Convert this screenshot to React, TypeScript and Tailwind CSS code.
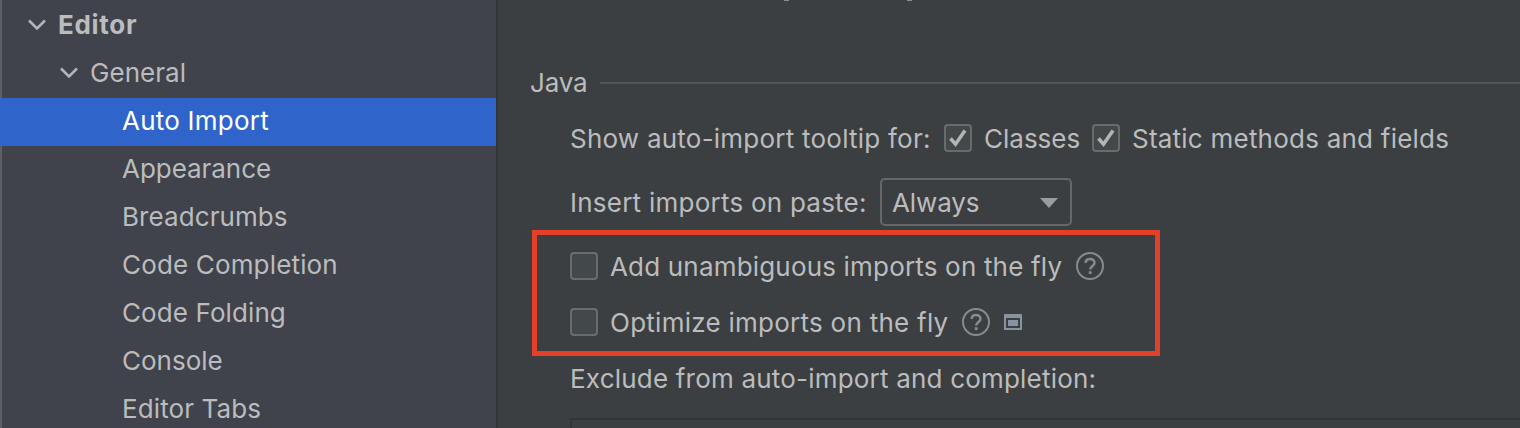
import { clsx } from "clsx";

type TreeItem = {
  label: string;
  level: number;
  expanded?: boolean;
  selected?: boolean;
  tracking: string;
};

const treeItems: TreeItem[] = [
  { label: "Editor", level: 0, expanded: true, tracking: "tracking-[0.7px]" },
  { label: "General", level: 1, expanded: true, tracking: "tracking-[0.05px]" },
  { label: "Auto Import", level: 2, selected: true, tracking: "tracking-[0.22px]" },
  { label: "Appearance", level: 2, tracking: "tracking-[-0.05px]" },
  { label: "Breadcrumbs", level: 2, tracking: "tracking-[0.08px]" },
  { label: "Code Completion", level: 2, tracking: "tracking-[0.16px]" },
  { label: "Code Folding", level: 2, tracking: "tracking-[0.1px]" },
  { label: "Console", level: 2, tracking: "tracking-[0px]" },
  { label: "Editor Tabs", level: 2, tracking: "tracking-[0.1px]" },
];

function Chevron() {
  return (
    <svg width="18" height="12" viewBox="0 0 18 12" fill="none" className="shrink-0">
      <path d="M1 1.5L9 9.5L17 1.5" stroke="#b2b5b9" strokeWidth="2.5" />
    </svg>
  );
}

function Checkbox({ checked = false }: { checked?: boolean }) {
  return (
    <span className="flex h-7 w-7 shrink-0 items-center justify-center rounded-[4px] border-2 border-[#686c6b] bg-[#43484a]">
      {checked && (
        <svg width="24" height="24" viewBox="0 0 24 24" fill="none">
          <path d="M4.5 12.5L9.5 18.2L19 4.5" stroke="#b2b4b5" strokeWidth="3.6" />
        </svg>
      )}
    </span>
  );
}

function HelpIcon() {
  return (
    <svg width="28" height="28" viewBox="0 0 28 28" fill="none" className="shrink-0">
      <circle cx="14" cy="14" r="13" stroke="#868b91" strokeWidth="2" />
      <path
        d="M9.7 11C9.7 8.6 11.5 7 14 7C16.5 7 18.5 8.5 18.5 10.9C18.5 13.9 14.2 14.1 14.2 17.6"
        stroke="#868b91"
        strokeWidth="2.5"
      />
      <rect x="12.8" y="19.2" width="2.8" height="2.8" fill="#868b91" />
    </svg>
  );
}

function ScopeIcon() {
  return (
    <svg width="18" height="16" viewBox="0 0 18 16" className="shrink-0">
      <path d="M0 0H18V16H0V0ZM2 4V14H16V4H2Z" fill="#8793a0" fillRule="evenodd" />
      <rect x="4" y="6" width="10" height="6" fill="#8793a0" />
    </svg>
  );
}

export default function App() {
  return (
    <div className="flex h-[428px] w-[1520px] overflow-hidden bg-[#3c3f41] font-['Inter',sans-serif] text-[26px] leading-[48px] whitespace-nowrap text-[#bbbcbd]">
      {/* Settings tree */}
      <nav className="w-[496px] shrink-0 overflow-hidden bg-[#40434b]">
        <div className="border-l-2 border-[#5c5f66]">
          {treeItems.map((item) => (
            <div
              key={item.label}
              className={clsx(
                "flex h-12 items-center",
                item.level === 0 && "h-[50px] pl-[26px] font-bold",
                item.level === 1 && "pl-[58px]",
                item.level === 2 && !item.selected && "pl-[120px]",
                item.selected && "-ml-0.5 bg-[#2f65ca] pl-[122px] text-white",
              )}
            >
              {item.expanded && (
                <span className={clsx("mr-3 flex", item.level > 0 && "pb-[2px]")}>
                  <Chevron />
                </span>
              )}
              <span className={clsx(item.tracking, item.level > 0 && "pb-[2px]")}>{item.label}</span>
            </div>
          ))}
        </div>
      </nav>
      <div className="w-[2px] shrink-0 bg-[#333537]" />

      {/* Options panel */}
      <main className="flex min-w-0 flex-1 flex-col pl-[34px]">
        {/* Tail of the section scrolled out above */}
        <div className="flex h-[59px] shrink-0 gap-[118px] pl-[252px]">
          <span className="h-px w-[5px] bg-[#8c8d8e]" />
          <span className="h-px w-[5px] bg-[#8c8d8e]" />
        </div>

        <div className="flex h-12 shrink-0 items-center">
          <span className="-ml-[2px] w-[70px] tracking-[-0.2px]">Java</span>
          <span className="h-[2px] flex-1 bg-[#515355]" />
        </div>

        <div className="mt-[7px] flex h-12 shrink-0 items-center pl-[38px]">
          <span className="w-[374px] pt-[2px] tracking-[0.23px]">Show auto-import tooltip for:</span>
          <Checkbox checked />
          <span className="ml-3 w-[108px] pt-[2px]">Classes</span>
          <Checkbox checked />
          <span className="ml-3 pt-[2px] tracking-[0.23px]">Static methods and fields</span>
        </div>

        <div className="mt-4 flex h-12 shrink-0 items-center pl-[38px]">
          <span className="w-[310px] pt-[2px] tracking-[0.24px]">Insert imports on paste:</span>
          <button className="flex h-12 w-[192px] items-center justify-between rounded-[5px] border-2 border-[#656768] pr-3 pl-[10px]">
            <span className="pt-[2px] tracking-[-0.1px]">Always</span>
            <svg width="18" height="10" viewBox="0 0 18 10" className="mt-[2px]">
              <path d="M0 0H18L9 10Z" fill="#999da1" />
            </svg>
          </button>
        </div>

        {/* Highlighted options */}
        <div className="mt-[4px] flex h-[126px] w-[628px] shrink-0 flex-col gap-2 border-[5px] border-[#e43f28] pt-[7px] pl-[33px]">
          <div className="flex h-12 items-center">
            <Checkbox />
            <span className="ml-3 w-[466px] pt-[2px] tracking-[0.18px]">Add unambiguous imports on the fly</span>
            <HelpIcon />
          </div>
          <div className="flex h-12 items-center">
            <Checkbox />
            <span className="ml-3 w-[352px] pt-[2px] tracking-[0.26px]">Optimize imports on the fly</span>
            <HelpIcon />
            <span className="ml-[14px] flex">
              <ScopeIcon />
            </span>
          </div>
        </div>

        <div className="-mt-px h-[63px] shrink-0 pl-[38px] tracking-[0.2px]">
          Exclude from auto-import and completion:
        </div>
        <div className="ml-[38px] h-[10px] shrink-0 border-t-2 border-l-2 border-[#323435]" />
      </main>
    </div>
  );
}
